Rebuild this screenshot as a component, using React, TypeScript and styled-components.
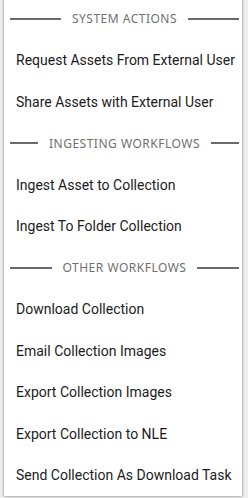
import { Fragment } from "react";
import styled, { createGlobalStyle } from "styled-components";

const GlobalStyle = createGlobalStyle`
    html, body {
        margin: 0;
        padding: 0;
        background: #efefef;
        overflow: hidden;
    }
`;

const Page = styled.div`
    width: 248px;
    height: 498px;
    overflow: hidden;
`;

const Menu = styled.div`
    width: 238px;
    margin: -2px 0 0 4px;
    background: #fff;
    box-shadow: 0 0 2px rgba(0, 0, 0, 0.45), 0 0 4px rgba(0, 0, 0, 0.15);
`;

const SectionHeader = styled.div`
    height: 41.5px;
    display: flex;
    align-items: center;
    gap: 11px;
    padding: 0 3px 0 6px;
    font-family: "Noto Sans", sans-serif;
    font-size: 12px;
    letter-spacing: 0.5px;
    color: #707070;
    text-transform: uppercase;
    white-space: nowrap;
`;

const Rule = styled.span`
    flex: 1;
    height: 2px;
    background: #6a6a6a;
`;

const Item = styled.div`
    height: 41.5px;
    display: flex;
    align-items: center;
    padding-left: 12px;
    font-family: Roboto, sans-serif;
    font-size: 14px;
    color: #1c1c1c;
    white-space: nowrap;
    cursor: pointer;
`;

const sections = [
    { title: "System Actions", items: ["Request Assets From External User", "Share Assets with External User"] },
    { title: "Ingesting Workflows", items: ["Ingest Asset to Collection", "Ingest To Folder Collection"] },
    {
        title: "Other Workflows",
        items: [
            "Download Collection",
            "Email Collection Images",
            "Export Collection Images",
            "Export Collection to NLE",
            "Send Collection As Download Task",
        ],
    },
];

const App: React.FC = () => {
    return (
        <Page>
            <GlobalStyle />
            <Menu>
                {sections.map((section) => (
                    <Fragment key={section.title}>
                        <SectionHeader>
                            <Rule />
                            {section.title}
                            <Rule />
                        </SectionHeader>
                        {section.items.map((item) => (
                            <Item key={item}>{item}</Item>
                        ))}
                    </Fragment>
                ))}
            </Menu>
        </Page>
    );
};

export default App;
